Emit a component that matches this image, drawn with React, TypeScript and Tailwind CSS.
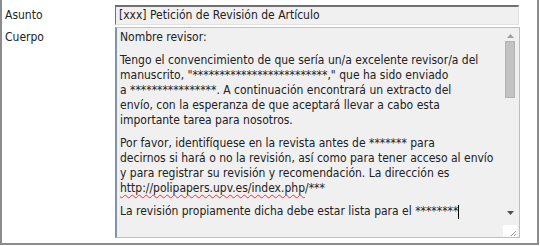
import React from 'react';

const font = { fontFamily: '"DejaVu Sans Condensed", "DejaVu Sans", sans-serif' };

const lines: React.ReactNode[] = [
  'Nombre revisor:',
  '',
  'Tengo el convencimiento de que sería un/a excelente revisor/a del',
  'manuscrito, "*************************," que ha sido enviado',
  'a ****************. A continuación encontrará un extracto del',
  'envío, con la esperanza de que aceptará llevar a cabo esta',
  'importante tarea para nosotros.',
  '',
  'Por favor, identifíquese en la revista antes de ******* para',
  'decirnos si hará o no la revisión, así como para tener acceso al envío',
  'y para registrar su revisión y recomendación. La dirección es',
  <span>
    <span className="underline decoration-wavy decoration-red-500 decoration-1 underline-offset-2">http://polipapers.upv.es/index.php</span>/***
  </span>,
  '',
  <span>
    La revisión propiamente dicha debe estar lista para el ********
    <span className="inline-block w-px h-[14px] bg-black align-middle" />
  </span>,
];

const App: React.FC = () => {
  return (
    <div className="w-[540px] h-[246px] bg-white overflow-hidden" style={font}>
      <div className="h-[245px] w-[539px] border-l-2 border-r-2 border-b-2 border-[#8c8c8c] pl-[3px] pt-[5px] text-[12px] text-[#222]">
        {/* Asunto */}
        <div className="flex items-start">
          <div className="w-[110px] pt-[1px]">Asunto</div>
          <div className="w-[404px] h-[20px] bg-[#f0f0f0] border-t-2 border-l border-[#707070] border-r border-b border-r-[#e2e2e2] border-b-[#e2e2e2] pl-[3px] leading-[16px] whitespace-nowrap">
            [xxx] Petición de Revisión de Artículo
          </div>
        </div>
        {/* Cuerpo */}
        <div className="flex items-start mt-[2px]">
          <div className="w-[110px] pt-[1px]">Cuerpo</div>
          <div className="w-[405px] h-[211px] bg-[#f0f0f0] border border-[#a8c3e4] border-l-2 border-l-[#7f93ad] flex">
            <div className="flex-1 pl-[3px] pt-[2px] leading-[15px] overflow-hidden">
              {lines.map((l, i) =>
                l === '' ? (
                  <div key={i} className="h-[8px]" />
                ) : (
                  <div key={i} className="whitespace-nowrap h-[15px]">{l}</div>
                )
              )}
            </div>
            {/* scrollbar */}
            <div className="w-[14px] mr-[2px] flex flex-col items-center">
              <svg width="7" height="4" viewBox="0 0 7 4" className="mt-[6px]">
                <path d="M0 4 L3.5 0 L7 4 Z" fill="#a0a0a0" />
              </svg>
              <div className="w-[10px] h-[57px] mt-[3px] bg-[#c2c2c2] border border-[#b4b4b4]" />
              <div className="flex-1" />
              <svg width="7" height="4" viewBox="0 0 7 4" className="mb-[10px]">
                <path d="M0 0 L7 0 L3.5 4 Z" fill="#505050" />
              </svg>
              <div className="w-[14px] h-[12px] bg-white flex items-end justify-end">
                <svg width="8" height="8" viewBox="0 0 8 8">
                  <path d="M7 2 L2 7 M7 5 L5 7" stroke="#9a9a9a" strokeWidth="1" />
                </svg>
              </div>
            </div>
          </div>
        </div>
      </div>
    </div>
  );
};

export default App;
